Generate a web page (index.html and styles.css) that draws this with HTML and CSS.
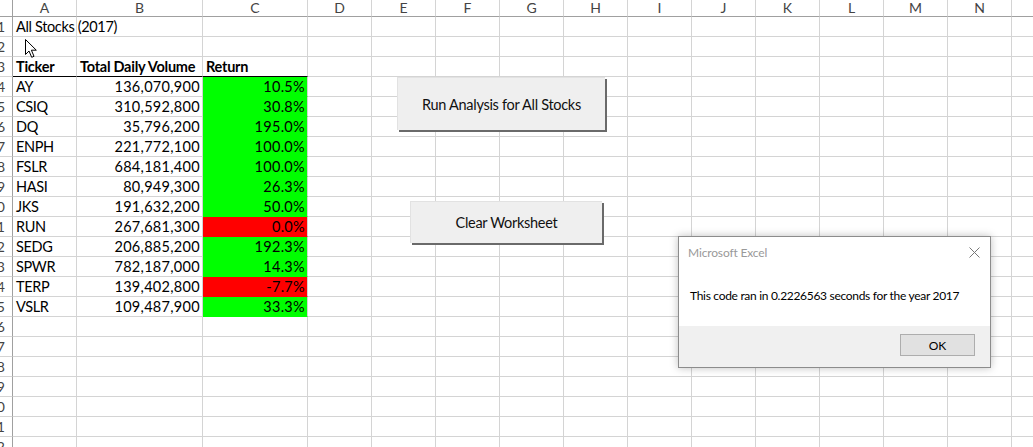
FILE: index.html
```html
<!DOCTYPE html>
<html>
<head>
<meta charset="utf-8">
<link rel="stylesheet" href="styles.css">
</head>
<body>
<div class="sheet">
  <div class="row head">
    <div class="c rh corner"></div>
    <div class="c ch">A</div><div class="c ch">B</div><div class="c ch">C</div><div class="c ch">D</div><div class="c ch">E</div><div class="c ch">F</div><div class="c ch">G</div><div class="c ch">H</div><div class="c ch">I</div><div class="c ch">J</div><div class="c ch">K</div><div class="c ch">L</div><div class="c ch">M</div><div class="c ch">N</div><div class="c ch"></div>
  </div>
  <div class="row"><div class="c rh">1</div><div class="c spill">All Stocks (2017)</div><div class="c"></div><div class="c"></div><div class="c"></div><div class="c"></div><div class="c"></div><div class="c"></div><div class="c"></div><div class="c"></div><div class="c"></div><div class="c"></div><div class="c"></div><div class="c"></div><div class="c"></div><div class="c"></div></div>
  <div class="row"><div class="c rh">2</div><div class="c"></div><div class="c"></div><div class="c"></div><div class="c"></div><div class="c"></div><div class="c"></div><div class="c"></div><div class="c"></div><div class="c"></div><div class="c"></div><div class="c"></div><div class="c"></div><div class="c"></div><div class="c"></div><div class="c"></div></div>
  <div class="row"><div class="c rh">3</div><div class="c b th">Ticker</div><div class="c b th">Total Daily Volume</div><div class="c b th">Return</div><div class="c"></div><div class="c"></div><div class="c"></div><div class="c"></div><div class="c"></div><div class="c"></div><div class="c"></div><div class="c"></div><div class="c"></div><div class="c"></div><div class="c"></div><div class="c"></div></div>
  <div class="row"><div class="c rh">4</div><div class="c">AY</div><div class="c r">136,070,900</div><div class="c r g">10.5%</div><div class="c"></div><div class="c"></div><div class="c"></div><div class="c"></div><div class="c"></div><div class="c"></div><div class="c"></div><div class="c"></div><div class="c"></div><div class="c"></div><div class="c"></div><div class="c"></div></div>
  <div class="row"><div class="c rh">5</div><div class="c">CSIQ</div><div class="c r">310,592,800</div><div class="c r g">30.8%</div><div class="c"></div><div class="c"></div><div class="c"></div><div class="c"></div><div class="c"></div><div class="c"></div><div class="c"></div><div class="c"></div><div class="c"></div><div class="c"></div><div class="c"></div><div class="c"></div></div>
  <div class="row"><div class="c rh">6</div><div class="c">DQ</div><div class="c r">35,796,200</div><div class="c r g">195.0%</div><div class="c"></div><div class="c"></div><div class="c"></div><div class="c"></div><div class="c"></div><div class="c"></div><div class="c"></div><div class="c"></div><div class="c"></div><div class="c"></div><div class="c"></div><div class="c"></div></div>
  <div class="row"><div class="c rh">7</div><div class="c">ENPH</div><div class="c r">221,772,100</div><div class="c r g">100.0%</div><div class="c"></div><div class="c"></div><div class="c"></div><div class="c"></div><div class="c"></div><div class="c"></div><div class="c"></div><div class="c"></div><div class="c"></div><div class="c"></div><div class="c"></div><div class="c"></div></div>
  <div class="row"><div class="c rh">8</div><div class="c">FSLR</div><div class="c r">684,181,400</div><div class="c r g">100.0%</div><div class="c"></div><div class="c"></div><div class="c"></div><div class="c"></div><div class="c"></div><div class="c"></div><div class="c"></div><div class="c"></div><div class="c"></div><div class="c"></div><div class="c"></div><div class="c"></div></div>
  <div class="row"><div class="c rh">9</div><div class="c">HASI</div><div class="c r">80,949,300</div><div class="c r g">26.3%</div><div class="c"></div><div class="c"></div><div class="c"></div><div class="c"></div><div class="c"></div><div class="c"></div><div class="c"></div><div class="c"></div><div class="c"></div><div class="c"></div><div class="c"></div><div class="c"></div></div>
  <div class="row"><div class="c rh">10</div><div class="c">JKS</div><div class="c r">191,632,200</div><div class="c r g">50.0%</div><div class="c"></div><div class="c"></div><div class="c"></div><div class="c"></div><div class="c"></div><div class="c"></div><div class="c"></div><div class="c"></div><div class="c"></div><div class="c"></div><div class="c"></div><div class="c"></div></div>
  <div class="row"><div class="c rh">11</div><div class="c">RUN</div><div class="c r">267,681,300</div><div class="c r red">0.0%</div><div class="c"></div><div class="c"></div><div class="c"></div><div class="c"></div><div class="c"></div><div class="c"></div><div class="c"></div><div class="c"></div><div class="c"></div><div class="c"></div><div class="c"></div><div class="c"></div></div>
  <div class="row"><div class="c rh">12</div><div class="c">SEDG</div><div class="c r">206,885,200</div><div class="c r g">192.3%</div><div class="c"></div><div class="c"></div><div class="c"></div><div class="c"></div><div class="c"></div><div class="c"></div><div class="c"></div><div class="c"></div><div class="c"></div><div class="c"></div><div class="c"></div><div class="c"></div></div>
  <div class="row"><div class="c rh">13</div><div class="c">SPWR</div><div class="c r">782,187,000</div><div class="c r g">14.3%</div><div class="c"></div><div class="c"></div><div class="c"></div><div class="c"></div><div class="c"></div><div class="c"></div><div class="c"></div><div class="c"></div><div class="c"></div><div class="c"></div><div class="c"></div><div class="c"></div></div>
  <div class="row"><div class="c rh">14</div><div class="c">TERP</div><div class="c r">139,402,800</div><div class="c r red">-7.7%</div><div class="c"></div><div class="c"></div><div class="c"></div><div class="c"></div><div class="c"></div><div class="c"></div><div class="c"></div><div class="c"></div><div class="c"></div><div class="c"></div><div class="c"></div><div class="c"></div></div>
  <div class="row"><div class="c rh">15</div><div class="c">VSLR</div><div class="c r">109,487,900</div><div class="c r g">33.3%</div><div class="c"></div><div class="c"></div><div class="c"></div><div class="c"></div><div class="c"></div><div class="c"></div><div class="c"></div><div class="c"></div><div class="c"></div><div class="c"></div><div class="c"></div><div class="c"></div></div>
  <div class="row"><div class="c rh">16</div><div class="c"></div><div class="c"></div><div class="c"></div><div class="c"></div><div class="c"></div><div class="c"></div><div class="c"></div><div class="c"></div><div class="c"></div><div class="c"></div><div class="c"></div><div class="c"></div><div class="c"></div><div class="c"></div><div class="c"></div></div>
  <div class="row"><div class="c rh">17</div><div class="c"></div><div class="c"></div><div class="c"></div><div class="c"></div><div class="c"></div><div class="c"></div><div class="c"></div><div class="c"></div><div class="c"></div><div class="c"></div><div class="c"></div><div class="c"></div><div class="c"></div><div class="c"></div><div class="c"></div></div>
  <div class="row"><div class="c rh">18</div><div class="c"></div><div class="c"></div><div class="c"></div><div class="c"></div><div class="c"></div><div class="c"></div><div class="c"></div><div class="c"></div><div class="c"></div><div class="c"></div><div class="c"></div><div class="c"></div><div class="c"></div><div class="c"></div><div class="c"></div></div>
  <div class="row"><div class="c rh">19</div><div class="c"></div><div class="c"></div><div class="c"></div><div class="c"></div><div class="c"></div><div class="c"></div><div class="c"></div><div class="c"></div><div class="c"></div><div class="c"></div><div class="c"></div><div class="c"></div><div class="c"></div><div class="c"></div><div class="c"></div></div>
  <div class="row"><div class="c rh">20</div><div class="c"></div><div class="c"></div><div class="c"></div><div class="c"></div><div class="c"></div><div class="c"></div><div class="c"></div><div class="c"></div><div class="c"></div><div class="c"></div><div class="c"></div><div class="c"></div><div class="c"></div><div class="c"></div><div class="c"></div></div>
  <div class="row"><div class="c rh">21</div><div class="c"></div><div class="c"></div><div class="c"></div><div class="c"></div><div class="c"></div><div class="c"></div><div class="c"></div><div class="c"></div><div class="c"></div><div class="c"></div><div class="c"></div><div class="c"></div><div class="c"></div><div class="c"></div><div class="c"></div></div>
  <div class="row"><div class="c rh">22</div><div class="c"></div><div class="c"></div><div class="c"></div><div class="c"></div><div class="c"></div><div class="c"></div><div class="c"></div><div class="c"></div><div class="c"></div><div class="c"></div><div class="c"></div><div class="c"></div><div class="c"></div><div class="c"></div><div class="c"></div></div>

  <div class="btn btn-run">Run Analysis for All Stocks</div>
  <div class="btn btn-clear">Clear Worksheet</div>

  <svg class="cursor" width="14" height="20" viewBox="0 0 14 20">
    <path d="M0.5 0.5 L0.5 15.5 L4 12 L6.7 18.3 L9 17.3 L6.4 11.2 L11.3 11.2 Z" fill="#fff" stroke="#000" stroke-width="1" stroke-linejoin="miter"/>
  </svg>

  <div class="dialog">
    <div class="dlg-title">
      <span>Microsoft Excel</span>
      <svg class="dlg-close" width="11" height="11" viewBox="0 0 11 11"><path d="M0.5 0.5 L10.5 10.5 M10.5 0.5 L0.5 10.5" stroke="#777" stroke-width="1"/></svg>
    </div>
    <div class="dlg-msg">This code ran in 0.2226563 seconds for the year 2017</div>
    <div class="dlg-foot"><div class="ok">OK</div></div>
  </div>
</div>
</body>
</html>
```

FILE: styles.css
```css
html, body {
  margin: 0;
  padding: 0;
  background: #fff;
}

.sheet {
  position: relative;
  width: 1033px;
  height: 447px;
  overflow: hidden;
  background: #fff;
  font-family: Lato, "Liberation Sans", sans-serif;
  font-size: 14.5px;
  color: #000;
}

.row {
  display: grid;
  grid-template-columns: 13px 64px 126px 105px repeat(12, 64px);
  height: 20px;
}

.row.head {
  height: 17px;
}

.c {
  box-sizing: border-box;
  border-right: 1px solid #d4d4d4;
  border-bottom: 1px solid #d4d4d4;
  padding: 0 3px 0 3px;
  display: flex;
  align-items: flex-end;
  white-space: nowrap;
  overflow: hidden;
  line-height: 18px;
  letter-spacing: -0.35px;
}

.c.r {
  justify-content: flex-end;
  padding-right: 2px;
  letter-spacing: 0.3px;
}

.c.spill {
  overflow: visible;
}

.c.b {
  font-weight: bold;
  letter-spacing: -0.25px;
}

.c.th {
  border-bottom: 1px solid #000;
}

.c.g {
  background: #00ff00;
  border-bottom-color: #00ff00;
}

.c.red {
  background: #ff0000;
  border-bottom-color: #ff0000;
}

.head .c {
  border-bottom-color: #a0a0a0;
  justify-content: center;
  align-items: center;
  color: #444;
  font-size: 14px;
  line-height: 16px;
  padding: 0;
  letter-spacing: 0;
}

.c.rh {
  border-right-color: #a0a0a0;
  justify-content: flex-end;
  align-items: center;
  padding: 0 7px 0 0;
  color: #444;
  font-size: 14px;
  letter-spacing: 0;
}

.btn {
  position: absolute;
  box-sizing: border-box;
  background: #efefef;
  border-top: 1px solid #e2e2e2;
  border-left: 1px solid #e2e2e2;
  box-shadow: 2px 2px 0 #6a6a6a;
  display: flex;
  align-items: center;
  justify-content: center;
  font-size: 14.5px;
  letter-spacing: -0.3px;
  color: #111;
}

.btn-run {
  left: 397px;
  top: 77px;
  width: 208px;
  height: 53px;
}

.btn-clear {
  left: 410px;
  top: 201px;
  width: 192px;
  height: 42px;
}

.cursor {
  position: absolute;
  left: 25px;
  top: 39px;
}

.dialog {
  position: absolute;
  left: 678px;
  top: 236px;
  width: 313px;
  height: 132px;
  box-sizing: border-box;
  background: #fff;
  border: 1px solid #8c8c8c;
  box-shadow: 0 0 8px rgba(0, 0, 0, 0.25);
  display: flex;
  flex-direction: column;
  font-family: Lato, "Noto Sans", sans-serif;
  font-size: 12px;
}

.dlg-title {
  display: flex;
  align-items: center;
  justify-content: space-between;
  height: 30px;
  padding: 0 10px 0 9px;
  color: #999;
  font-size: 12px;
  letter-spacing: -0.15px;
}

.dlg-close {
  margin-top: 1px;
}

.dlg-msg {
  flex: 1;
  display: flex;
  align-items: center;
  padding: 0 0 2px 11px;
  color: #000;
  letter-spacing: -0.3px;
}

.dlg-foot {
  height: 41px;
  background: #f0f0f0;
  display: flex;
  justify-content: flex-end;
  align-items: flex-start;
  padding: 8px 15px 0 0;
  box-sizing: border-box;
}

.ok {
  width: 75px;
  height: 22px;
  box-sizing: border-box;
  border: 1px solid #adadad;
  background: #e1e1e1;
  display: flex;
  align-items: center;
  justify-content: center;
  color: #000;
}
```
